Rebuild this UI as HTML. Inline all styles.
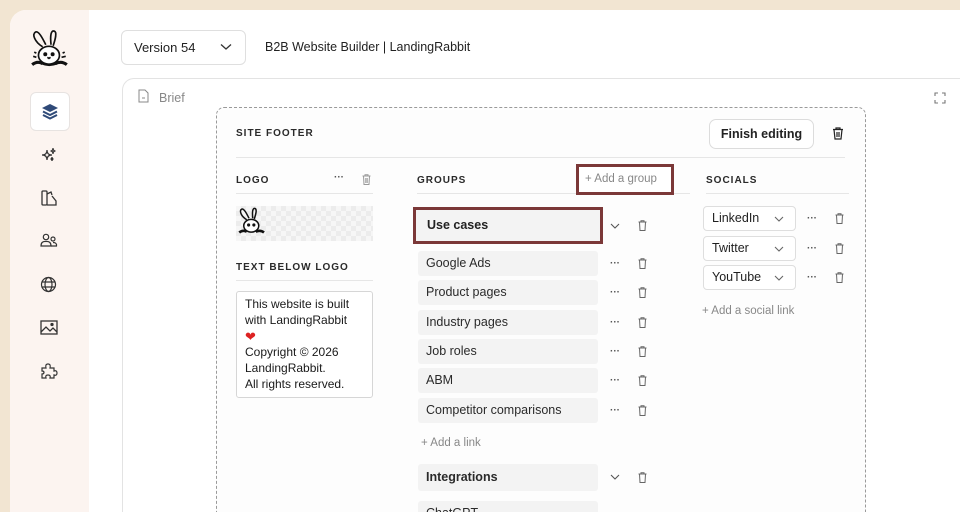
<!DOCTYPE html>
<html style="width:960px;height:512px;overflow:hidden"><head><meta charset="utf-8"><style>
*{margin:0;padding:0;box-sizing:border-box}
body{width:960px;height:512px;overflow:hidden;background:#f2e5d2;font-family:"Liberation Sans",sans-serif;color:#1f1f1f;position:relative}
.a{position:absolute}
.panel{left:10px;top:10px;width:950px;height:502px;background:#fff;border-radius:16px 0 0 0;overflow:hidden}
.side{left:0;top:0;width:79px;height:502px;background:#fcf4f0}
.lbl{font-size:10px;font-weight:bold;letter-spacing:1px;color:#2a2a2a}
.ln{height:1px;background:#e6e6e6}
.item{background:#f3f3f3;border-radius:3px;font-size:12.5px;padding-left:8px;line-height:24px;height:25px;width:180px;left:418px;color:#2a2a2a;overflow:hidden}
.dots{font-size:10px;color:#555;letter-spacing:0;font-weight:bold}
.sel{left:703px;width:93px;height:25px;border:1px solid #dedede;border-radius:4px;background:#fff;font-size:12.5px;line-height:23px;padding-left:8px}
.gray{color:#888;font-size:11.5px}
svg{position:absolute;overflow:visible}
</style></head><body>
<div class="a panel">
 <div class="a side"></div>
</div>
<svg style="left:29px;top:29px" width="42" height="42" viewBox="0 0 40 40" fill="none" stroke="#111" stroke-width="1.6">
<path d="M13 17 C5 12 3 5 6 3 C9 1 13 9 16 15"/>
<path d="M21 15 C20 6 21 1 24 2 C27 3 25 10 23 16"/>
<ellipse cx="19" cy="25" rx="10" ry="8.5" fill="#fff"/>
<circle cx="15.5" cy="24" r="1.1" fill="#111"/><circle cx="22.5" cy="24" r="1.1" fill="#111"/>
<path d="M17.5 27 L19 28 L20.5 27"/>
<path d="M3 34 Q8 30 13 33 M25 33 Q31 30 36 34" stroke-width="3"/>
<path d="M12 33 Q19 36 27 33"/>
<path d="M4 26 L7 27 M31 27 L35 26 M5 22 L7 23 M32 23 L34 22"/>
</svg>
<div class="a" style="left:30px;top:92px;width:40px;height:39px;background:#fff;border:1px solid #e7e3e1;border-radius:6px"></div>
<svg style="left:40px;top:102px" width="20" height="20" viewBox="0 0 20 20"><path d="M10 2 L18 6 L10 10 L2 6Z" fill="#2f4a78"/><path d="M3 9.5 L10 13 L17 9.5" stroke="#2f4a78" stroke-width="2" fill="none"/><path d="M3 13 L10 16.5 L17 13" stroke="#2f4a78" stroke-width="2" fill="none"/></svg>
<svg style="left:40px;top:146px" width="18" height="18" viewBox="0 0 18 18" fill="none" stroke="#333" stroke-width="1.2"><path d="M7 4 Q7 9 2 9 Q7 9 7 14 Q7 9 12 9 Q7 9 7 4Z"/><path d="M13 2 Q13 5 10.5 5 Q13 5 13 8 Q13 5 15.5 5 Q13 5 13 2Z"/><path d="M12 11 Q12 13 10.5 13 Q12 13 12 15 Q12 13 13.5 13 Q12 13 12 11Z"/></svg>
<svg style="left:41px;top:190px" width="16" height="16" viewBox="0 0 16 16" fill="none" stroke="#333" stroke-width="1.3"><rect x="1" y="1" width="5" height="14" rx="1"/><path d="M6 4 L10 2 L11 5 M6 15 L15 15 L15 11 L11 6"/></svg>
<svg style="left:40px;top:233px" width="18" height="16" viewBox="0 0 18 16" fill="none" stroke="#333" stroke-width="1.2"><circle cx="6" cy="4" r="2.7"/><path d="M1 13 Q1 8 6 8.5 Q11 8 11 13 Z"/><circle cx="13" cy="6" r="2"/><path d="M11 13 L16.5 13 Q17 9.5 13 9.5"/></svg>
<svg style="left:40px;top:276px" width="17" height="17" viewBox="0 0 17 17" fill="none" stroke="#333" stroke-width="1.2"><circle cx="8.5" cy="8.5" r="7"/><ellipse cx="8.5" cy="8.5" rx="3.5" ry="7"/><path d="M1.5 6 L15.5 6 M1.5 11 L15.5 11"/></svg>
<svg style="left:40px;top:320px" width="18" height="15" viewBox="0 0 18 15" fill="none" stroke="#333" stroke-width="1.3"><rect x="1" y="1" width="16" height="13"/><path d="M1 12 L6 7 L10 11 L13 8 L17 12"/><circle cx="12" cy="4.5" r="1" fill="#333"/></svg>
<svg style="left:40px;top:362px" width="18" height="18" viewBox="0 0 18 18" fill="none" stroke="#333" stroke-width="1.2"><path d="M2 6 L6 6 Q5 2 8 2 Q11 2 10 6 L14 6 L14 9 Q17 8 17 11 Q17 14 14 13 L14 16 L10 16 Q11 13 8 13 Q5 13 6 16 L2 16 L2 12 Q4 12 4 10.5 Q4 9 2 9Z"/></svg>

<div class="a" style="left:121px;top:30px;width:125px;height:35px;border:1px solid #dfdfdf;border-radius:6px;font-size:13px;line-height:33px;padding-left:12px;color:#222">Version 54</div>
<svg style="left:220px;top:43px" width="12" height="8" viewBox="0 0 12 8"><path d="M1 1.5 L6 6 L11 1.5" stroke="#333" stroke-width="1.3" fill="none"/></svg>
<div class="a" style="left:265px;top:40px;font-size:12.5px;color:#222">B2B Website Builder | LandingRabbit</div>

<div class="a" style="left:122px;top:78px;width:838px;height:434px;border:1px solid #e3e3e3;border-bottom:none;border-right:none;border-radius:12px 0 0 0;background:#fff"></div>
<svg style="left:138px;top:89px" width="11" height="14" viewBox="0 0 11 14" fill="none" stroke="#888" stroke-width="1"><path d="M1 1 L7 1 L10 4 L10 13 L1 13Z M4 9 L7 9"/></svg>
<div class="a" style="left:159px;top:91px;font-size:12.5px;color:#888">Brief</div>
<svg style="left:934px;top:92px" width="12" height="12" viewBox="0 0 12 12" fill="none" stroke="#777" stroke-width="1.1"><path d="M1 4 L1 1 L4 1 M8 1 L11 1 L11 4 M11 8 L11 11 L8 11 M4 11 L1 11 L1 8"/></svg>

<div class="a" style="left:216px;top:107px;width:650px;height:405px;border:1px dashed #9a9a9a;border-bottom:none;border-radius:8px 8px 0 0;background:#fdfdfd"></div>
<div class="a lbl" style="left:236px;top:128px">SITE FOOTER</div>
<div class="a" style="left:709px;top:119px;width:105px;height:30px;border:1px solid #dcdcdc;border-radius:7px;background:#fff;font-size:12.5px;font-weight:bold;line-height:28px;text-align:center;color:#222">Finish editing</div>
<svg style="left:832px;top:127px" width="12" height="13" viewBox="0 0 12 13" fill="none" stroke="#222" stroke-width="1.2"><path d="M1 2.5 L11 2.5 M4 2.5 L4 1 L8 1 L8 2.5 M2 2.5 L3 12 L9 12 L10 2.5 M5 5 L5 10 M7 5 L7 10"/></svg>
<div class="a ln" style="left:236px;top:157px;width:609px"></div>

<div class="a lbl" style="left:236px;top:175px">LOGO</div>
<div class="a dots" style="left:334px;top:172px">···</div>
<svg style="left:362px;top:174px" width="9" height="11" viewBox="0 0 9 11" fill="none" stroke="#999" stroke-width="1"><path d="M0.5 2 L8.5 2 M3 2 L3 0.7 L6 0.7 L6 2 M1.5 2 L2 10.5 L7 10.5 L7.5 2 M3.8 4 L3.8 9 M5.2 4 L5.2 9"/></svg>
<div class="a ln" style="left:236px;top:193px;width:137px"></div>
<div class="a" style="left:236px;top:206px;width:137px;height:35px;background-color:#f6f6f6;background-image:linear-gradient(45deg,#ececec 25%,transparent 25%,transparent 75%,#ececec 75%),linear-gradient(45deg,#ececec 25%,transparent 25%,transparent 75%,#ececec 75%);background-size:10px 10px;background-position:0 0,5px 5px"></div>
<svg style="left:237px;top:207px" width="30" height="30" viewBox="0 0 40 40" fill="none" stroke="#111" stroke-width="2"><path d="M13 17 C5 12 3 5 6 3 C9 1 13 9 16 15"/><path d="M21 15 C20 6 21 1 24 2 C27 3 25 10 23 16"/><ellipse cx="19" cy="25" rx="10" ry="8.5" fill="#fff"/><circle cx="15.5" cy="24" r="1.1" fill="#111"/><circle cx="22.5" cy="24" r="1.1" fill="#111"/><path d="M3 34 Q8 30 13 33 M25 33 Q31 30 36 34" stroke-width="3.5"/></svg>
<div class="a lbl" style="left:236px;top:262px">TEXT BELOW LOGO</div>
<div class="a ln" style="left:236px;top:280px;width:137px"></div>
<div class="a" style="left:236px;top:291px;width:137px;height:107px;border:1px solid #d6d6d6;border-radius:3px;background:#fff;font-size:12px;line-height:15.8px;padding:5px 0 0 8px;color:#1a1a1a">This website is built with LandingRabbit<br><span style="color:#d22;font-size:13px">❤</span><br>Copyright © 2026 LandingRabbit.<br>All rights reserved.</div>

<div class="a lbl" style="left:417px;top:175px">GROUPS</div>
<div class="a ln" style="left:417px;top:193px;width:273px"></div>
<div class="a" style="left:576px;top:164px;width:98px;height:31px;border:3px solid #7b3838;background:#fff;font-size:11.5px;color:#888;line-height:25px;padding-left:6px">+ Add a group</div>
<div class="a" style="left:413px;top:207px;width:190px;height:37px;border:3px solid #7b3838;background:#f3f3f3;font-size:12.5px;font-weight:bold;line-height:31px;padding-left:11px;color:#222">Use cases</div>

<div class="a item" style="top:251px">Google Ads</div>
<div class="a item" style="top:280px">Product pages</div>
<div class="a item" style="top:310px">Industry pages</div>
<div class="a item" style="top:339px">Job roles</div>
<div class="a item" style="top:368px">ABM</div>
<div class="a item" style="top:398px">Competitor comparisons</div>
<div class="a gray" style="left:421px;top:437px">+ Add a link</div>
<div class="a item" style="top:464px;height:27px;line-height:27px;font-weight:bold">Integrations</div>
<div class="a item" style="top:501px;height:11px;border-radius:3px 3px 0 0">ChatGPT</div>

<svg style="left:610px;top:223px" width="10" height="6" viewBox="0 0 10 6"><path d="M1 1 L5 5 L9 1" stroke="#555" stroke-width="1.1" fill="none"/></svg>
<svg style="left:610px;top:474px" width="10" height="6" viewBox="0 0 10 6"><path d="M1 1 L5 5 L9 1" stroke="#555" stroke-width="1.1" fill="none"/></svg>
<div class="a dots" style="left:610px;top:258px">···</div>
<div class="a dots" style="left:610px;top:287px">···</div>
<div class="a dots" style="left:610px;top:317px">···</div>
<div class="a dots" style="left:610px;top:346px">···</div>
<div class="a dots" style="left:610px;top:375px">···</div>
<div class="a dots" style="left:610px;top:405px">···</div>

<svg width="0" height="0"><defs><symbol id="t" viewBox="0 0 9 11"><path d="M0.5 2 L8.5 2 M3 2 L3 0.7 L6 0.7 L6 2 M1.5 2 L2 10.5 L7 10.5 L7.5 2" fill="none" stroke="#666" stroke-width="1"/></symbol></defs></svg>
<svg style="left:638px;top:220px" width="9" height="11"><use href="#t"/></svg>
<svg style="left:638px;top:258px" width="9" height="11"><use href="#t"/></svg>
<svg style="left:638px;top:287px" width="9" height="11"><use href="#t"/></svg>
<svg style="left:638px;top:317px" width="9" height="11"><use href="#t"/></svg>
<svg style="left:638px;top:346px" width="9" height="11"><use href="#t"/></svg>
<svg style="left:638px;top:375px" width="9" height="11"><use href="#t"/></svg>
<svg style="left:638px;top:405px" width="9" height="11"><use href="#t"/></svg>
<svg style="left:638px;top:472px" width="9" height="11"><use href="#t"/></svg>

<div class="a lbl" style="left:706px;top:175px">SOCIALS</div>
<div class="a ln" style="left:706px;top:193px;width:143px"></div>
<div class="a sel" style="top:206px">LinkedIn</div>
<div class="a sel" style="top:236px">Twitter</div>
<div class="a sel" style="top:265px">YouTube</div>
<svg style="left:774px;top:216px" width="10" height="6" viewBox="0 0 10 6"><path d="M1 1 L5 5 L9 1" stroke="#666" stroke-width="1.1" fill="none"/></svg>
<svg style="left:774px;top:246px" width="10" height="6" viewBox="0 0 10 6"><path d="M1 1 L5 5 L9 1" stroke="#666" stroke-width="1.1" fill="none"/></svg>
<svg style="left:774px;top:275px" width="10" height="6" viewBox="0 0 10 6"><path d="M1 1 L5 5 L9 1" stroke="#666" stroke-width="1.1" fill="none"/></svg>
<div class="a dots" style="left:807px;top:213px">···</div>
<div class="a dots" style="left:807px;top:243px">···</div>
<div class="a dots" style="left:807px;top:272px">···</div>
<svg style="left:835px;top:213px" width="9" height="11"><use href="#t"/></svg>
<svg style="left:835px;top:243px" width="9" height="11"><use href="#t"/></svg>
<svg style="left:835px;top:272px" width="9" height="11"><use href="#t"/></svg>
<div class="a gray" style="left:702px;top:305px">+ Add a social link</div>
</body></html>
